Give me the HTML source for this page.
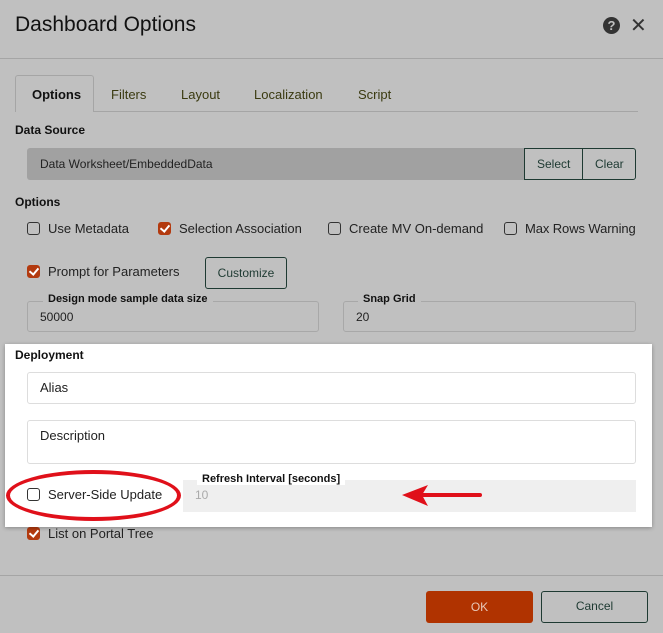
<!DOCTYPE html>
<html><head><style>
*{box-sizing:border-box;margin:0;padding:0}
body{width:663px;height:633px;background:#c0c0c0;font-family:"Liberation Sans",sans-serif;position:relative;overflow:hidden;color:#222}
.a{position:absolute}
.t{font-size:13px;color:#222}
.b{font-weight:bold;font-size:12px;color:#111}
.cb{position:absolute;width:13px;height:13px;border:1.3px solid #333;border-radius:3px;background:transparent}
.cb.on{background:#b33a0f;border-color:#b33a0f}
.cb.on::after{content:"";position:absolute;left:3px;top:0px;width:4px;height:7px;border:solid #fff;border-width:0 2px 2px 0;transform:rotate(40deg)}
.fld{position:absolute;border:1px solid #a8a8a8;border-radius:3px}
.lg{position:absolute;background:#c0c0c0;font-size:11px;font-weight:bold;padding:0 5px;color:#111}
</style></head><body>
<div class="a" style="left:15px;top:13px;font-size:21px;color:#111">Dashboard Options</div>
<div class="a" style="left:603px;top:17px;width:17px;height:17px;border-radius:50%;background:#333;color:#c0c0c0;font-size:13px;font-weight:bold;text-align:center;line-height:17px">?</div>
<div class="a" style="left:630px;top:13px;font-size:20px;color:#333">✕</div>
<div class="a" style="left:0;top:58px;width:663px;height:1px;background:#a5a5a5"></div>

<div class="a" style="left:15px;top:111px;width:623px;height:1px;background:#a5a5a5"></div>
<div class="a" style="left:15px;top:75px;width:79px;height:37px;border:1px solid #a5a5a5;border-bottom:none;border-radius:3px 3px 0 0;background:#c0c0c0"></div>
<div class="a" style="left:32px;top:87px;font-size:13px;font-weight:bold;color:#111">Options</div>
<div class="a" style="left:111px;top:87px;font-size:13px;color:#3a3a10">Filters</div>
<div class="a" style="left:181px;top:87px;font-size:13px;color:#3a3a10">Layout</div>
<div class="a" style="left:254px;top:87px;font-size:13px;color:#3a3a10">Localization</div>
<div class="a" style="left:358px;top:87px;font-size:13px;color:#3a3a10">Script</div>

<div class="a b" style="left:15px;top:123px">Data Source</div>
<div class="a" style="left:27px;top:148px;width:498px;height:32px;background:#a1a1a1;border-radius:3px 0 0 3px"></div>
<div class="a t" style="left:40px;top:157px;font-size:12px">Data Worksheet/EmbeddedData</div>
<div class="a" style="left:524px;top:148px;width:112px;height:32px;border:1px solid #1e3a32;border-radius:0 3px 3px 0"></div>
<div class="a" style="left:582px;top:148px;width:1px;height:32px;background:#1e3a32"></div>
<div class="a" style="left:537px;top:157px;font-size:12px;color:#1e3a32">Select</div>
<div class="a" style="left:595px;top:157px;font-size:12px;color:#1e3a32">Clear</div>

<div class="a b" style="left:15px;top:195px">Options</div>
<div class="cb" style="left:27px;top:222px"></div><div class="a t" style="left:48px;top:221px">Use Metadata</div>
<div class="cb on" style="left:158px;top:222px"></div><div class="a t" style="left:179px;top:221px">Selection Association</div>
<div class="cb" style="left:328px;top:222px"></div><div class="a t" style="left:349px;top:221px">Create MV On-demand</div>
<div class="cb" style="left:504px;top:222px"></div><div class="a t" style="left:525px;top:221px;letter-spacing:-0.1px">Max Rows Warning</div>
<div class="cb on" style="left:27px;top:265px"></div><div class="a t" style="left:48px;top:264px">Prompt for Parameters</div>
<div class="a" style="left:205px;top:257px;width:82px;height:32px;border:1px solid #1e3a32;border-radius:3px;font-size:12px;color:#1e3a32;text-align:center;line-height:30px">Customize</div>

<div class="fld" style="left:27px;top:301px;width:292px;height:31px"></div>
<div class="lg" style="left:43px;top:293px">Design mode sample data size</div>
<div class="a t" style="left:40px;top:310px;font-size:12px">50000</div>
<div class="fld" style="left:343px;top:301px;width:293px;height:31px"></div>
<div class="lg" style="left:358px;top:293px">Snap Grid</div>
<div class="a t" style="left:356px;top:310px;font-size:12px">20</div>

<div class="cb on" style="left:27px;top:527px"></div><div class="a t" style="left:48px;top:526px">List on Portal Tree</div>

<div class="a" style="left:5px;top:344px;width:647px;height:183px;background:#fff;box-shadow:0 1px 4px rgba(0,0,0,.3)"></div>
<div class="a b" style="left:15px;top:348px">Deployment</div>
<div class="a" style="left:27px;top:372px;width:609px;height:32px;border:1px solid #ddd;border-radius:3px"></div>
<div class="a t" style="left:40px;top:380px">Alias</div>
<div class="a" style="left:27px;top:420px;width:609px;height:44px;border:1px solid #ddd;border-radius:3px"></div>
<div class="a t" style="left:40px;top:428px">Description</div>
<div class="a" style="left:183px;top:480px;width:453px;height:32px;background:#efefef"></div>
<div class="a" style="left:197px;top:473px;background:#fff;padding:0 5px;font-size:11px;font-weight:bold;color:#111">Refresh Interval [seconds]</div>
<div class="a" style="left:195px;top:488px;font-size:12px;color:#aaa">10</div>
<div class="cb" style="left:27px;top:488px"></div><div class="a t" style="left:48px;top:487px">Server-Side Update</div>
<div class="a" style="left:6px;top:470px;width:175px;height:51px;border:4px solid #e0101a;border-radius:50%"></div>
<svg class="a" style="left:400px;top:482px" width="84" height="30"><line x1="20" y1="13" x2="80" y2="13" stroke="#e0101a" stroke-width="4" stroke-linecap="round"/><polygon points="2,13 28,3 22,13 28,24" fill="#e0101a"/></svg>

<div class="a" style="left:0;top:575px;width:663px;height:1px;background:#a5a5a5"></div>
<div class="a" style="left:426px;top:591px;width:107px;height:32px;background:#b03300;border-radius:3px;color:#e8c8b8;font-size:12px;text-align:center;line-height:32px">OK</div>
<div class="a" style="left:541px;top:591px;width:107px;height:32px;border:1.5px solid #1e3a32;border-radius:3px;color:#1e3a32;font-size:12px;text-align:center;line-height:29px">Cancel</div>
</body></html>
